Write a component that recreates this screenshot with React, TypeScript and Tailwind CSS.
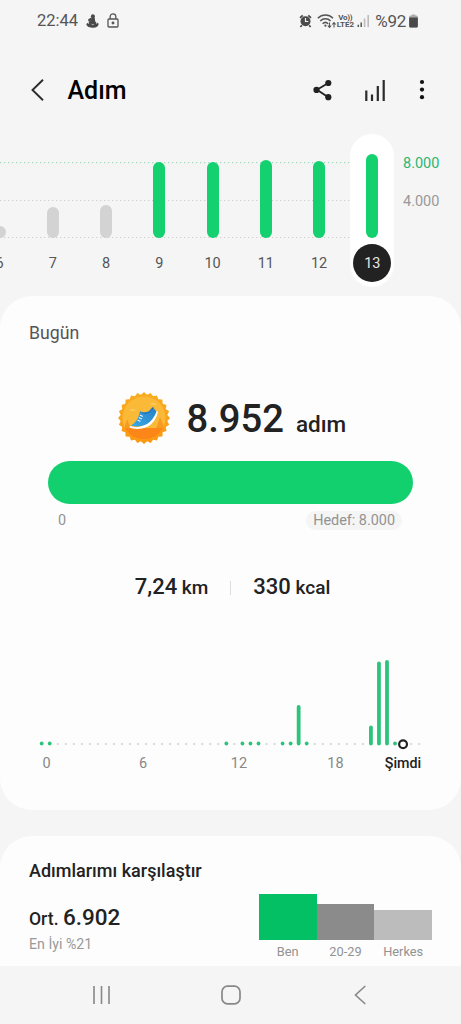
import { clsx } from "clsx";

interface Day {
  label: string;
  height: number;
  reached: boolean;
}

const DAYS: Day[] = [
  { label: "6", height: 12, reached: false },
  { label: "7", height: 31, reached: false },
  { label: "8", height: 33, reached: false },
  { label: "9", height: 76, reached: true },
  { label: "10", height: 76, reached: true },
  { label: "11", height: 78, reached: true },
  { label: "12", height: 77, reached: true },
  { label: "13", height: 84, reached: true },
];

const SELECTED = "13";

// half-hour slots with recorded steps, value = bar height in px
const SLOTS: Record<number, number> = {
  0: 4, 1: 4, 23: 4, 25: 4, 26: 4, 27: 4, 30: 4, 31: 4, 32: 40.5, 33: 4, 41: 20, 42: 84, 43: 85.5, 44: 4,
};

const NOW_SLOT = 45;

const HOURS = [
  { label: "0", x: 46.5 },
  { label: "6", x: 143 },
  { label: "12", x: 239 },
  { label: "18", x: 335.5 },
];

const COMPARE = [
  { label: "Ben", bar: "h-[46px] bg-[#02c063]" },
  { label: "20-29", bar: "h-9 bg-[#8b8b8b]" },
  { label: "Herkes", bar: "h-[30px] bg-[#bcbcbc]" },
];

const StatusBar = () => (
  <div className="flex h-10 items-center justify-between pl-[37px] pr-[43px] pt-px text-[#555]">
    <div className="flex items-center">
      <span className="text-[16.5px] leading-5">22:44</span>
      <svg className="ml-[8px]" width="13" height="14" viewBox="0 0 13 14" fill="#4a4a4a">
        <circle cx="6.9" cy="2.2" r="2" />
        <path d="M5.2 3.5h3.500l.5 4c1 .5 1.400 1.300 1.200 2.500l.8-.4-.2-1.200 1.700 1.400c-.3 2.500-2.400 3.900-5.200 3.900C3.800 13.700.7 12.800.3 10l1.600-1.200.3 1.200.6-.2c-.5-1.800.6-3 2.200-3.500z" />
        <path d="M2 5.600l3.200-2v3L2.600 7.400z" />
        <path d="M5.300 9.800c.6 1 1.900 1.200 2.800.3" stroke="#f5f5f5" strokeWidth=".6" fill="none" />
      </svg>
      <svg className="ml-[8px]" width="12" height="15" viewBox="0 0 12 15" fill="none" stroke="#555" strokeWidth="1.300">
        <rect x="1" y="6" width="10" height="8" rx="1" />
        <path d="M3.200 6V3.600a2.800 2.800 0 0 1 5.600 0V6" />
        <circle cx="6" cy="10" r=".8" fill="#555" />
      </svg>
    </div>
    <div className="flex items-center">
      <svg width="13" height="14" viewBox="0 0 13 14">
        <circle cx="6.500" cy="7.200" r="5" fill="#4a4a4a" />
        <path d="M1 3.800L3.700 1.300M12 3.800L9.300 1.300M2.900 11.200L1.400 13M10.100 11.200l1.500 1.800" stroke="#4a4a4a" strokeWidth="1.700" />
        <path d="M6.500 4v3.500h2.800" stroke="#f5f5f5" strokeWidth="1.200" fill="none" />
      </svg>
      <svg className="ml-[5px]" width="20" height="16" viewBox="0 0 20 16" fill="none" stroke="#555" strokeWidth="1.500">
        <path d="M.8 5.200c4.300-4.300 11-4.300 15.200 0M3.200 8c3-3 7.500-3 10.400 0M5.600 10.700c1.600-1.600 3.900-1.600 5.600 0" />
        <circle cx="8.400" cy="12.700" r="1.100" fill="#555" stroke="none" />
        <path d="M12.500 9.500v4.700M10.800 12.500l1.700 1.900 1.700-1.900M17 14.500V9.700M15.300 11.500L17 9.600l1.700 1.900" strokeWidth="1.100" />
      </svg>
      <div className="-ml-px flex w-[18px] flex-col items-center font-bold leading-[7px]">
        <span className="text-[8px] tracking-[-0.3px]">Vo))</span>
        <span className="text-[8px] tracking-[-0.1px]">LTE2</span>
      </div>
      <svg className="ml-[3px]" width="13" height="14" viewBox="0 0 13 14">
        <path d="M1.300 10.700V13M4.200 8.500V13" stroke="#555" strokeWidth="1.500" />
        <path d="M7.600 4.500V13M11.200 1V13" stroke="#bbb" strokeWidth="1.600" />
      </svg>
      <span className="ml-[5px] text-[17px] leading-5 tracking-[-0.3px]">%92</span>
      <svg className="ml-[3px]" width="9" height="14" viewBox="0 0 10 14" preserveAspectRatio="none">
        <path d="M3 .5h4v2H3z" fill="#aaa" />
        <rect x=".2" y="1.500" width="9.600" height="12" rx="1.500" fill="#aaa" />
        <path d="M.2 3.500h9.600V12A1.500 1.500 0 0 1 8.300 13.500H1.700A1.500 1.500 0 0 1 .2 12z" fill="#4a4a4a" />
      </svg>
    </div>
  </div>
);

const Header = () => (
  <div className="flex h-[94px] items-center pl-[31px] pr-9 pt-[6px]">
    <svg width="13" height="22" viewBox="0 0 13 22" fill="none" stroke="#2b2b2b" strokeWidth="1.900">
      <path d="M12 .8L1.500 11 12 21.200" />
    </svg>
    <h1 className="ml-[23.500px] pt-[2px] text-[25px] font-medium leading-8 text-black">Adım</h1>
    <div className="ml-auto flex items-center">
      <svg width="19" height="22" viewBox="0 0 19 22">
        <path d="M15.300 4L4 10.800l11.300 7.400" fill="none" stroke="#222" strokeWidth="1.800" />
        <circle cx="15.300" cy="4" r="3.100" fill="#222" />
        <circle cx="3.500" cy="10.900" r="3.100" fill="#222" />
        <circle cx="15.300" cy="18.200" r="3.100" fill="#222" />
      </svg>
      <svg className="ml-8" width="23" height="23" viewBox="0 0 23 23" stroke="#2b2b2b" strokeWidth="2.200">
        <path d="M2.300 11.500V22M8 15.500V22M13.800 7V22M19.700 1V22" />
      </svg>
      <svg className="ml-8" width="6" height="22" viewBox="0 0 6 22" fill="#111">
        <circle cx="3" cy="3" r="2.100" />
        <circle cx="3" cy="10.600" r="2.100" />
        <circle cx="3" cy="18.200" r="2.100" />
      </svg>
    </div>
  </div>
);

const WeekChart = () => (
  <div className="relative flex h-[162px] shrink-0 overflow-hidden">
    <svg className="absolute left-0 top-0" width="461" height="110">
      <path d="M0 28.700H350" stroke="#8ed6b0" strokeDasharray="1.300 2.700" />
      <path d="M0 66.500H350M0 103.500H350" stroke="#cfcfcf" strokeDasharray="1.300 2.700" />
    </svg>
    <div className="relative -ml-[27px] flex">
      {DAYS.map((day) => {
        const selected = day.label === SELECTED;
        return (
          <div key={day.label} className="flex w-[53.250px] justify-center">
            <div
              className={clsx(
                "flex h-[153px] w-11 shrink-0 flex-col items-center rounded-full",
                selected && "bg-white"
              )}
            >
              <div className="flex h-[104px] shrink-0 items-end">
                <div
                  className={clsx("w-3 rounded-full", day.reached ? "bg-[#14d06f]" : "bg-[#d3d3d3]")}
                  style={{ height: day.height }}
                />
              </div>
              <span
                className={clsx(
                  "mt-[6px] flex size-[38px] shrink-0 items-center justify-center rounded-full pt-px text-[14.500px]",
                  selected ? "bg-[#222] text-[#e8e8e8]" : "text-[#555]"
                )}
              >
                {day.label}
              </span>
            </div>
          </div>
        );
      })}
    </div>
    <div className="ml-[4px] flex flex-col pt-5 text-[14.500px] leading-5">
      <span className="text-[#2bb673]">8.000</span>
      <span className="mt-[18px] text-[#999]">4.000</span>
    </div>
  </div>
);

const Badge = () => {
  const points = Array.from({ length: 48 }, (_, i) => {
    const a = (i * Math.PI) / 24;
    const r = i % 2 ? 23.500 : 26;
    return `${(26 + r * Math.cos(a)).toFixed(2)},${(26 + r * Math.sin(a)).toFixed(2)}`;
  }).join(" ");

  return (
    <svg width="52" height="52" viewBox="0 0 52 52">
      <defs>
        <linearGradient id="rim" x1="0" y1="0" x2="0" y2="1">
          <stop offset="0" stopColor="#f9ad22" />
          <stop offset="1" stopColor="#fb9812" />
        </linearGradient>
        <linearGradient id="shoe" x1="0" y1="1" x2="1" y2="0">
          <stop offset="0" stopColor="#38a9e6" />
          <stop offset="1" stopColor="#287fc6" />
        </linearGradient>
        <clipPath id="disc">
          <circle cx="26" cy="26" r="21.500" />
        </clipPath>
      </defs>
      <polygon points={points} fill="url(#rim)" />
      <g clipPath="url(#disc)">
        <rect width="52" height="52" fill="#fbb938" />
        <path d="M9 27l4 10H6zM42 25l5 12h-9z" fill="#f69b22" />
        <rect y="36" width="52" height="16" fill="#fc8618" />
        <path d="M11 18.500c2-2 5-1.500 7 0zM32 12.500c2-2 5-1.500 7 0z" fill="#fdd36c" />
      </g>
      <path d="M12 34c5 2 11 1.500 16-2.500 4.500-3.500 7-8 9.500-12.500l2.500.5c-1 6-5 12.500-11 15.500-5.500 2.500-13.500 2.500-17.500.5z" fill="#fff" />
      <path d="M13 33.500c4-2.500 7.500-6 9-14.500l3 1.500 5.500-1 4-4.500 4 4.500c-2 5-4.500 9.500-9.500 12.500-5 2.800-12 3-16 1.500z" fill="url(#shoe)" />
      <path d="M19.500 28l3 1.500M20.800 25.500l3 1.500M21.800 23l3 1.500" stroke="#dff3ff" strokeWidth="1.200" />
      <path d="M24 20.500c4 2 8 0 11.500-5" stroke="#1c6fae" strokeWidth="1" fill="none" />
    </svg>
  );
};

const DayTimeline = () => (
  <svg className="mt-[52px] block" width="461" height="124" viewBox="0 0 461 124">
    {Array.from({ length: 48 }, (_, i) => {
      const x = 41.700 + i * 8.030;
      const h = SLOTS[i];
      if (i === NOW_SLOT) {
        return <circle key={i} cx={x} cy="90.300" r="3.900" fill="#fff" stroke="#222" strokeWidth="2.200" />;
      }
      return h ? (
        <rect key={i} x={x - 1.900} y={91.500 - h} width="3.800" height={h} rx="1.900" fill="#2cc47c" />
      ) : (
        <circle key={i} cx={x} cy="90" r="1.100" fill="#d3d3d3" />
      );
    })}
    {HOURS.map(({ label, x }) => (
      <text key={label} x={x} y="113.500" textAnchor="middle" fontSize="14.500" fill="#888">
        {label}
      </text>
    ))}
    <text x="403" y="113.500" textAnchor="middle" fontSize="14.300" fontWeight="500" fill="#222">
      Şimdi
    </text>
  </svg>
);

const TodayCard = () => (
  <section className="h-[514px] shrink-0 rounded-[32px] bg-[#fdfdfd] pt-[25px]">
    <div className="pl-[29px] text-[17.700px] leading-6 text-[#555]">Bugün</div>
    <div className="mt-[47px] flex h-[52px] items-center pl-[118px]">
      <Badge />
      <div className="ml-[16.500px] flex items-baseline pt-[2px] text-[#222]">
        <span className="text-[38.200px] font-medium leading-[50px]">8.952</span>
        <span className="ml-[12px] text-[22.500px] font-medium">adım</span>
      </div>
    </div>
    <div className="mx-12 mt-[17px] h-[43px] rounded-full bg-[#12d06e]" />
    <div className="flex items-center justify-between pl-[58px] pr-[59px] pt-[7px] text-[14.400px] leading-[19px] text-[#929292]">
      <span>0</span>
      <span className="rounded-full bg-[#f5f5f5] px-[7px]">Hedef: 8.000</span>
    </div>
    <div className="mt-[43px] flex items-center justify-center pl-[4px] text-[#222]">
      <div className="text-[19px] font-medium leading-7">
        <span className="text-[22px]">7,24</span> km
      </div>
      <div className="mx-[22px] h-[14px] w-px bg-[#ddd]" />
      <div className="text-[19px] font-medium leading-7">
        <span className="text-[22px]">330</span> kcal
      </div>
    </div>
    <DayTimeline />
  </section>
);

const CompareCard = () => (
  <section className="mt-[26px] flex h-[130px] shrink-0 justify-between rounded-t-[32px] bg-[#fdfdfd] pl-[29px] pr-[29px]">
    <div>
      <h2 className="mt-[23px] text-[18px] font-medium leading-6 text-[#222]">Adımlarımı karşılaştır</h2>
      <div className="mt-[20px] text-[17.600px] font-medium leading-7 text-[#222]">
        Ort. <span className="text-[22.500px]">6.902</span>
      </div>
      <div className="mt-px text-[14.200px] leading-5 text-[#999]">En İyi %21</div>
    </div>
    <div className="flex items-end pb-[5px]">
      {COMPARE.map(({ label, bar }) => (
        <div key={label} className="flex w-[57.700px] flex-col">
          <div className={bar} />
          <span className="mt-[3px] text-center text-[12.800px] leading-[18px] text-[#929292]">{label}</span>
        </div>
      ))}
    </div>
  </section>
);

const NavBar = () => (
  <nav className="flex h-[58px] shrink-0 items-center pl-[92px] text-[#888]">
    <svg width="20" height="20" viewBox="0 0 20 20" stroke="currentColor" strokeWidth="1.600">
      <path d="M2 1v18M9.500 1v18M17 1v18" />
    </svg>
    <svg className="ml-[108.500px]" width="20" height="20" viewBox="0 0 20 20" fill="none" stroke="currentColor" strokeWidth="1.700">
      <rect x="1" y="1.200" width="18" height="17.600" rx="5.500" />
    </svg>
    <svg className="ml-[113.500px]" width="13" height="20" viewBox="0 0 13 20" fill="none" stroke="currentColor" strokeWidth="1.600">
      <path d="M11.300 1L1.500 10l9.800 9" />
    </svg>
  </nav>
);

export default function App() {
  return (
    <div className="flex h-[1024px] w-[461px] flex-col overflow-hidden bg-[#f5f5f5] font-['Roboto',sans-serif]">
      <StatusBar />
      <Header />
      <WeekChart />
      <TodayCard />
      <CompareCard />
      <NavBar />
    </div>
  );
}
